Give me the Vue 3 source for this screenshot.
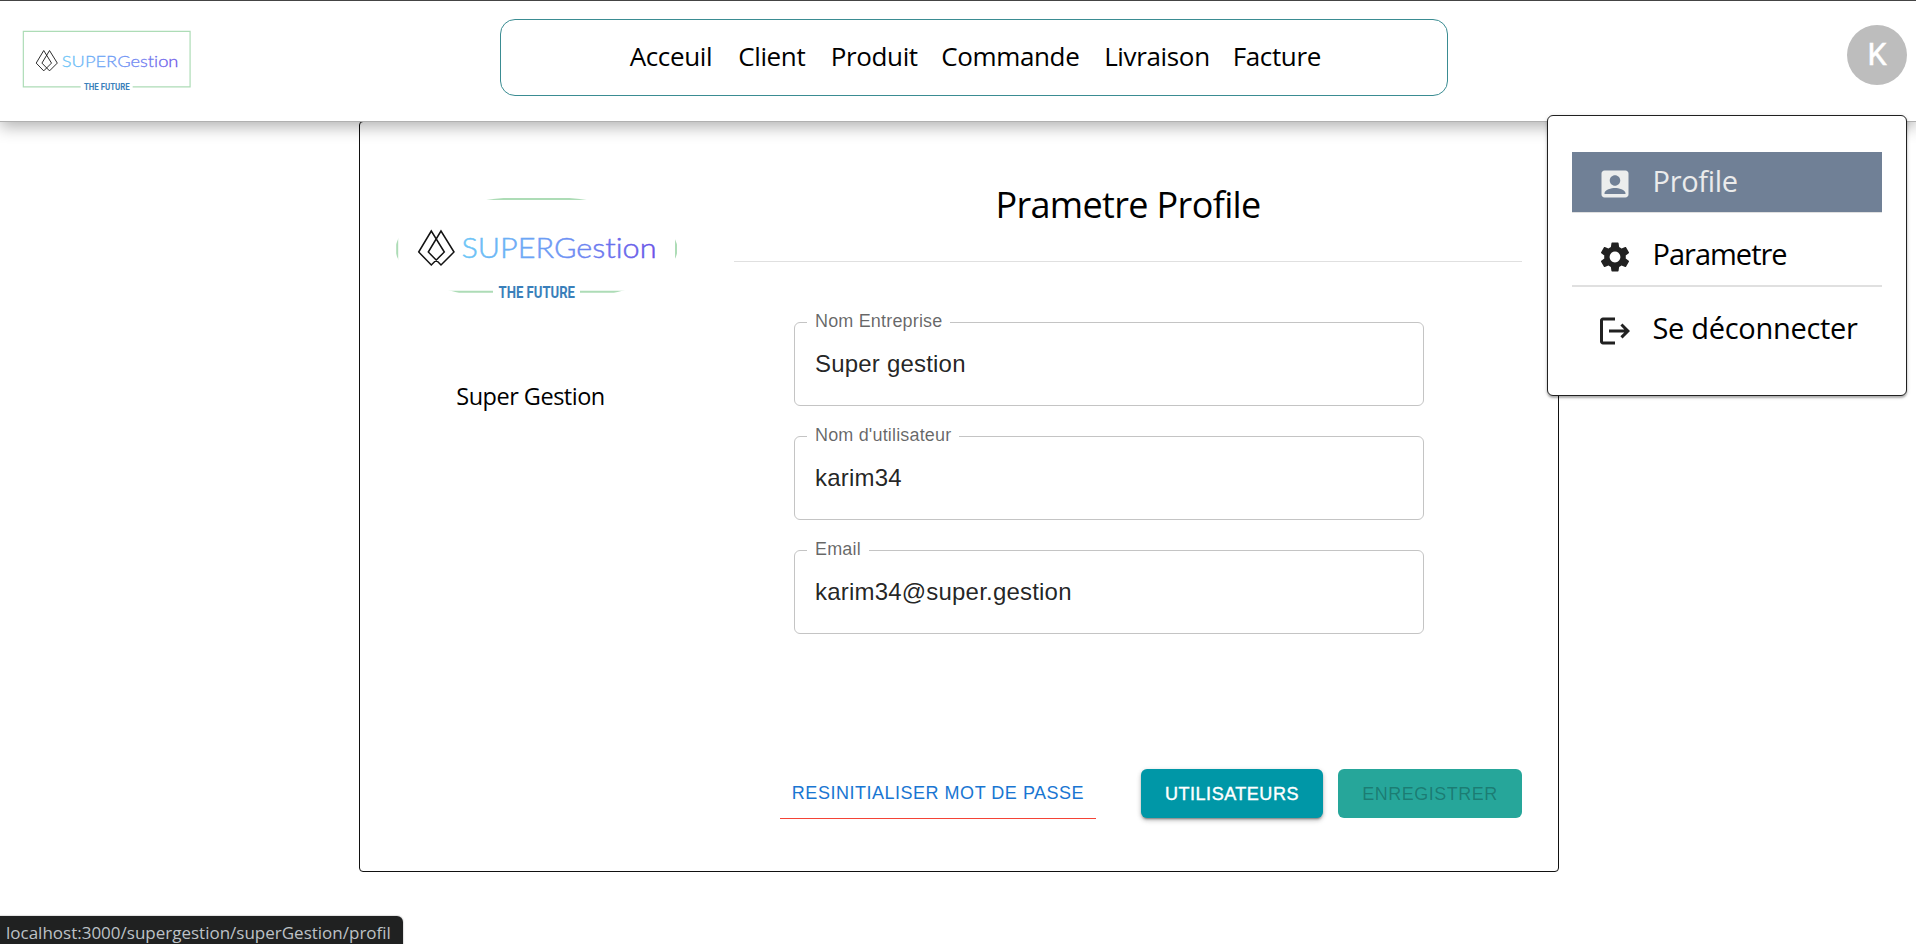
<script setup>
const nav = ['Acceuil', 'Client', 'Produit', 'Commande', 'Livraison', 'Facture']
const menu = [
  {
    label: 'Profile',
    active: true,
    path: 'M19 3H5c-1.11 0-2 .9-2 2v14c0 1.1.89 2 2 2h14c1.1 0 2-.9 2-2V5c0-1.1-.9-2-2-2zm-7 3.12c1.93 0 3.5 1.57 3.5 3.5s-1.57 3.5-3.5 3.5-3.5-1.57-3.5-3.5 1.57-3.5 3.5-3.5zM19 18.6H5v-.5c0-2.2 4.7-3.4 7-3.4s7 1.2 7 3.4z',
  },
  {
    label: 'Parametre',
    tight: true,
    path: 'M19.14 12.94c.04-.3.06-.61.06-.94 0-.32-.02-.64-.07-.94l2.03-1.58c.18-.14.23-.41.12-.61l-1.92-3.32c-.12-.22-.37-.29-.59-.22l-2.39.96c-.5-.38-1.03-.7-1.62-.94l-.36-2.54c-.04-.24-.24-.41-.48-.41h-3.84c-.24 0-.43.17-.47.41l-.36 2.54c-.59.24-1.13.57-1.62.94l-2.39-.96c-.22-.08-.47 0-.59.22L2.74 8.87c-.12.21-.08.47.12.61l2.03 1.58c-.05.3-.09.63-.09.94s.02.64.07.94l-2.03 1.58c-.18.14-.23.41-.12.61l1.92 3.32c.12.22.37.29.59.22l2.39-.96c.5.38 1.03.7 1.62.94l.36 2.54c.05.24.24.41.48.41h3.84c.24 0 .44-.17.47-.41l.36-2.54c.59-.24 1.13-.56 1.62-.94l2.39.96c.22.08.47 0 .59-.22l1.92-3.32c.12-.22.07-.47-.12-.61l-2.01-1.58zM12 15.6c-1.98 0-3.6-1.62-3.6-3.6s1.62-3.6 3.6-3.6 3.6 1.62 3.6 3.6-1.62 3.6-3.6 3.6z',
  },
  {
    label: 'Se déconnecter',
    last: true,
    path: 'M17 7l-1.41 1.41L18.17 11H8v2h10.17l-2.58 2.58L17 17l5-5zM4 5h8V3H4c-1.1 0-2 .9-2 2v14c0 1.1.9 2 2 2h8v-2H4V5z',
  },
]
const fields = [
  { label: 'Nom Entreprise', value: 'Super gestion' },
  { label: "Nom d'utilisateur", value: 'karim34' },
  { label: 'Email', value: 'karim34@super.gestion' },
]
</script>

<template>
  <div class="page">
    <svg class="defs" width="0" height="0">
      <defs>
        <linearGradient id="brand" gradientUnits="userSpaceOnUse" x1="67" y1="0" x2="262" y2="0">
          <stop offset="0" stop-color="#6cc6f6" />
          <stop offset="0.5" stop-color="#6d95f4" />
          <stop offset="1" stop-color="#6650e6" />
        </linearGradient>
        <symbol id="logo" viewBox="0 0 283 108">
          <path d="M98 96.7H2.2V4H281V96.7H185" fill="none" stroke="#addcb6" stroke-width="2" />
          <path
            d="M36.3 36L23.7 57L36.3 70L49.3 57ZM46 36L33.3 57L46 70L59 57Z"
            fill="none" stroke="#141414" stroke-width="1.5"
          />
          <text class="brand" x="66.5" y="63" textLength="195" lengthAdjust="spacingAndGlyphs" fill="url(#brand)" stroke="url(#brand)">SUPERGestion</text>
          <text class="tag" x="103.5" y="102.6" textLength="76.5" lengthAdjust="spacingAndGlyphs" fill="#3a7fba">THE FUTURE</text>
        </symbol>
      </defs>
    </svg>

    <header class="topbar">
      <svg class="logo-small"><use href="#logo" /></svg>
      <nav class="nav">
        <a v-for="item in nav" :key="item">{{ item }}</a>
      </nav>
      <div class="avatar">K</div>
    </header>

    <main class="card">
      <aside class="side">
        <svg class="logo-large"><use href="#logo" /></svg>
        <p class="company">Super Gestion</p>
      </aside>
      <section class="content">
        <h1>Prametre Profile</h1>
        <form class="form">
          <div v-for="f in fields" :key="f.label" class="field">
            <label>{{ f.label }}</label>
            <span>{{ f.value }}</span>
          </div>
        </form>
        <div class="actions">
          <button type="button" class="reset">RESINITIALISER MOT DE PASSE</button>
          <button type="button" class="users">UTILISATEURS</button>
          <button type="button" class="save">ENREGISTRER</button>
        </div>
      </section>
    </main>

    <div class="menu">
      <div v-for="m in menu" :key="m.label" class="item" :class="{ active: m.active, tight: m.tight, last: m.last }">
        <svg viewBox="0 0 24 24"><path :d="m.path" /></svg>
        <span>{{ m.label }}</span>
      </div>
    </div>

    <div class="status">localhost:3000/supergestion/superGestion/profil</div>
  </div>
</template>

<style>
body {
  background: #fff;
}
</style>

<style scoped>
* {
  box-sizing: border-box;
}
.page {
  position: relative;
  width: 1916px;
  height: 944px;
  overflow: hidden;
  background: #fff;
  font-family: "Open Sans", "Noto Sans", sans-serif;
  color: #000;
}
.defs {
  position: absolute;
}
.brand {
  font: 300 27.5px Lato, sans-serif;
  font-variant-ligatures: none;
  stroke-width: 0.45px;
}
.tag {
  font: 700 16px Roboto, sans-serif;
}
.topbar {
  position: relative;
  z-index: 1;
  display: flex;
  align-items: flex-start;
  justify-content: space-between;
  height: 122px;
  padding: 0 9px 0 22px;
  background: #fff;
  border-top: 1px solid #444;
  border-bottom: 1px solid #b0b0b0;
  box-shadow: 0 5px 15px rgba(0, 0, 0, 0.3);
}
.logo-small {
  width: 169.3px;
  height: 64.6px;
  margin-top: 28px;
}
.nav {
  display: grid;
  grid-template-columns: 108.5px 92.5px 110.5px 163px 128.5px auto;
  width: 948px;
  height: 77px;
  margin: 18px 91px 0 0;
  padding-left: 129px;
  border: 1px solid #3a8c92;
  border-radius: 15px;
  font-size: 26px;
  line-height: 72px;
  letter-spacing: -0.35px;
  white-space: nowrap;
}
.avatar {
  width: 60px;
  height: 60px;
  margin-top: 24px;
  border-radius: 50%;
  background: #bdbdbd;
  color: #fff;
  font: 400 30.5px/59px Roboto, sans-serif;
  -webkit-text-stroke: 0.5px #fff;
  text-align: center;
}
.card {
  display: flex;
  width: 1200px;
  height: 751px;
  margin: -1px 0 0 359px;
  border: 1px solid #111;
  border-radius: 4px;
}
.side {
  width: 374px;
  padding: 73px 0 0 35px;
}
.logo-large {
  display: block;
  width: 283px;
  height: 108px;
  clip-path: ellipse(141px 52.6px at 50% 50%);
}
.company {
  width: 271px;
  margin: 75px 0 0;
  font-size: 23.5px;
  line-height: 36px;
  letter-spacing: -0.5px;
  text-align: center;
}
.content {
  width: 788px;
}
h1 {
  height: 140px;
  margin: 0;
  padding-top: 56px;
  border-bottom: 1px solid #e0e0e0;
  font-size: 36px;
  font-weight: 400;
  line-height: 54px;
  letter-spacing: -0.65px;
  text-align: center;
}
.form {
  display: grid;
  gap: 30px;
  width: 630px;
  margin: 60px 0 0 60px;
}
.field {
  position: relative;
  height: 84px;
  padding-left: 20px;
  border: 1px solid #c4c4c4;
  border-radius: 6px;
  color: rgba(0, 0, 0, 0.87);
  font: 24px/82px "Liberation Sans", Arial, sans-serif;
  letter-spacing: 0.2px;
}
.field label {
  position: absolute;
  top: -12px;
  left: 12px;
  padding: 0 8px;
  background: #fff;
  color: rgba(0, 0, 0, 0.6);
  font-size: 18px;
  line-height: 21px;
  letter-spacing: 0.17px;
}
.actions {
  display: flex;
  justify-content: flex-end;
  margin-top: 135px;
}
button {
  height: 49px;
  padding: 0;
  border: 0;
  border-radius: 6px;
  font: 500 18px/48px "Liberation Sans", Arial, sans-serif;
  letter-spacing: 0.514px;
}
.reset {
  width: 316px;
  height: 50px;
  margin-right: 45px;
  border-bottom: 1px solid #f44336;
  border-radius: 0;
  background: none;
  color: #1976d2;
  line-height: 45px;
}
.users {
  width: 182px;
  margin-right: 15px;
  background: #0097a7;
  color: #fff;
  -webkit-text-stroke: 0.4px #fff;
  box-shadow: 0 3px 1px -2px rgba(0, 0, 0, 0.2), 0 2px 2px rgba(0, 0, 0, 0.14), 0 1px 5px rgba(0, 0, 0, 0.12),
    0 3px 5px rgba(0, 0, 0, 0.15);
}
.save {
  width: 184px;
  background: #26a69a;
  color: rgba(0, 0, 0, 0.26);
}
.menu {
  position: absolute;
  z-index: 2;
  top: 115px;
  left: 1547px;
  width: 360px;
  height: 281px;
  padding: 36px 24px;
  background: #fff;
  border: 1px solid #212121;
  border-radius: 6px;
  box-shadow: 0 2px 2px rgba(0, 0, 0, 0.25), 0 1px 4px rgba(0, 0, 0, 0.15);
}
.item {
  display: flex;
  height: 62px;
  margin-bottom: 12px;
  padding-left: 25px;
  border-bottom: 2px solid #e0e0e0;
  font-size: 29px;
  line-height: 58px;
  letter-spacing: -0.3px;
  white-space: nowrap;
}
.item svg {
  width: 36px;
  height: 36px;
  margin: 14px 19.5px 0 0;
  fill: #212121;
}
.item.active {
  height: 61px;
  border-bottom-color: #e0e0e0;
  border-bottom-width: 1px;
  background: #708096;
  background-clip: padding-box;
  color: #ebebeb;
  line-height: 57px;
}
.item.active svg {
  fill: #ebeded;
}
.item.tight {
  letter-spacing: -1px;
}
.item.last {
  border: 0;
}
.status {
  position: absolute;
  bottom: 0;
  left: 0;
  z-index: 3;
  width: 403px;
  height: 28px;
  padding-left: 6px;
  border-radius: 0 6px 0 0;
  background: #202121;
  color: #bdc1c6;
  box-shadow: 0 0 1px 1px rgba(0, 0, 0, 0.12);
  font-size: 17px;
  line-height: 33px;
  white-space: nowrap;
}
</style>
